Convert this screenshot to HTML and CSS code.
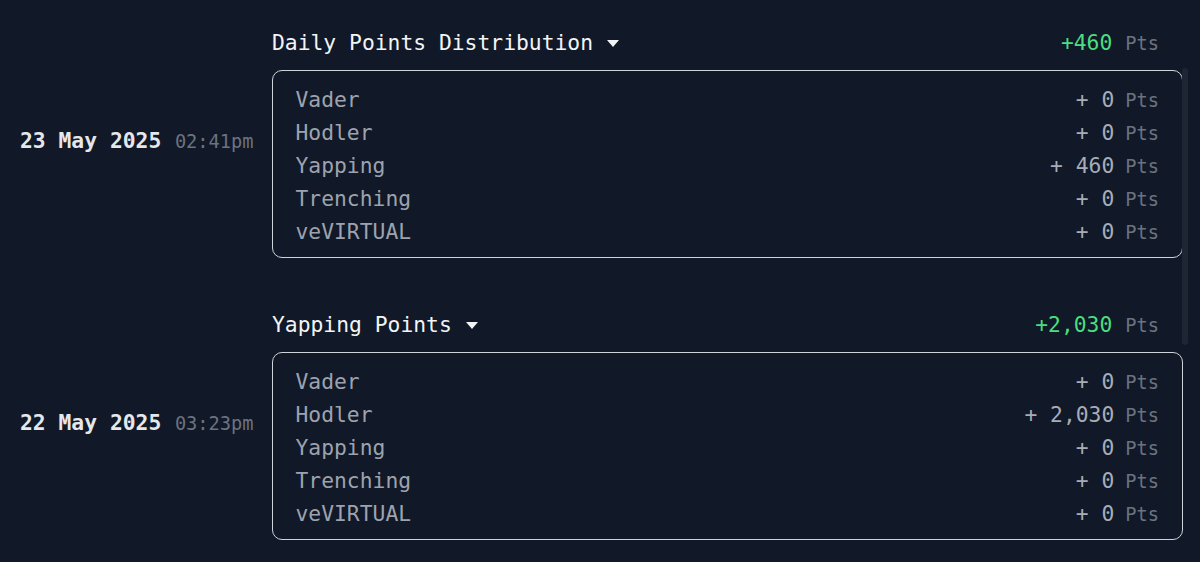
FILE: index.html
```html
<!DOCTYPE html>
<html>
<head>
<meta charset="utf-8">
<link rel="stylesheet" href="styles.css">
</head>
<body>
<div class="feed">
  <div class="entry">
    <div class="when"><span class="date">23 May 2025</span> <span class="time">02:41pm</span></div>
    <div class="detail">
      <div class="head">
        <div class="title">Daily Points Distribution <svg class="caret" width="12" height="7" viewBox="0 0 12 7"><path d="M0 0H12L6 7Z" fill="#f3f4f6"/></svg></div>
        <div class="total"><span class="green">+460</span><span class="pts">Pts</span></div>
      </div>
      <div class="box">
        <div class="row"><span class="name">Vader</span><span class="val">+ 0<span class="pts">Pts</span></span></div>
        <div class="row"><span class="name">Hodler</span><span class="val">+ 0<span class="pts">Pts</span></span></div>
        <div class="row"><span class="name">Yapping</span><span class="val">+ 460<span class="pts">Pts</span></span></div>
        <div class="row"><span class="name">Trenching</span><span class="val">+ 0<span class="pts">Pts</span></span></div>
        <div class="row"><span class="name">veVIRTUAL</span><span class="val">+ 0<span class="pts">Pts</span></span></div>
      </div>
    </div>
  </div>
  <div class="entry">
    <div class="when"><span class="date">22 May 2025</span> <span class="time">03:23pm</span></div>
    <div class="detail">
      <div class="head">
        <div class="title">Yapping Points <svg class="caret" width="12" height="7" viewBox="0 0 12 7"><path d="M0 0H12L6 7Z" fill="#f3f4f6"/></svg></div>
        <div class="total"><span class="green">+2,030</span><span class="pts">Pts</span></div>
      </div>
      <div class="box">
        <div class="row"><span class="name">Vader</span><span class="val">+ 0<span class="pts">Pts</span></span></div>
        <div class="row"><span class="name">Hodler</span><span class="val">+ 2,030<span class="pts">Pts</span></span></div>
        <div class="row"><span class="name">Yapping</span><span class="val">+ 0<span class="pts">Pts</span></span></div>
        <div class="row"><span class="name">Trenching</span><span class="val">+ 0<span class="pts">Pts</span></span></div>
        <div class="row"><span class="name">veVIRTUAL</span><span class="val">+ 0<span class="pts">Pts</span></span></div>
      </div>
    </div>
  </div>
  <div class="scrollbar"></div>
</div>
</body>
</html>
```
FILE: styles.css
```css
html, body {
  margin: 0;
  padding: 0;
  background: #111827;
  height: 100%;
  overflow: hidden;
}
body {
  font-family: "DejaVu Sans Mono", "Liberation Mono", monospace;
  color: #e5e7eb;
}
.feed {
  position: relative;
  padding: 28px 17px 0 20px;
  display: flex;
  flex-direction: column;
  gap: 52px;
}
.entry {
  display: flex;
  align-items: center;
}
.when {
  width: 252px;
  flex-shrink: 0;
  white-space: nowrap;
  padding-bottom: 6px;
}
.date {
  font-size: 21.33px;
  font-weight: bold;
  color: #e5e7eb;
}
.time {
  font-size: 18.67px;
  color: #6b7280;
  margin-left: 4px;
}
.detail {
  flex: 1;
  display: flex;
  flex-direction: column;
  gap: 13px;
}
.head {
  display: flex;
  justify-content: space-between;
  align-items: center;
  height: 29px;
  padding-right: 24px;
}
.title {
  font-size: 21.33px;
  color: #f3f4f6;
  display: flex;
  align-items: center;
  gap: 14px;
}
.caret {
  display: block;
  margin-top: 1px;
}
.total {
  font-size: 21.33px;
  display: flex;
  align-items: baseline;
}
.green {
  color: #4ade80;
}
.pts {
  font-size: 18.67px;
  color: #6b7280;
  margin-left: 13px;
}
.box {
  border: 1.5px solid #cfd3da;
  border-radius: 10px;
  padding: 12px 23px 9px 22.5px;
}
.row {
  display: flex;
  justify-content: space-between;
  align-items: baseline;
  height: 33px;
  line-height: 33px;
  font-size: 21.33px;
}
.name {
  color: #9ca3af;
}
.val {
  color: #a7adb8;
}
.val .pts {
  margin-left: 11px;
}
.scrollbar {
  position: absolute;
  left: 1182px;
  top: 68px;
  width: 6px;
  height: 277px;
  background: #1f2633;
  border-radius: 3px;
}
```
